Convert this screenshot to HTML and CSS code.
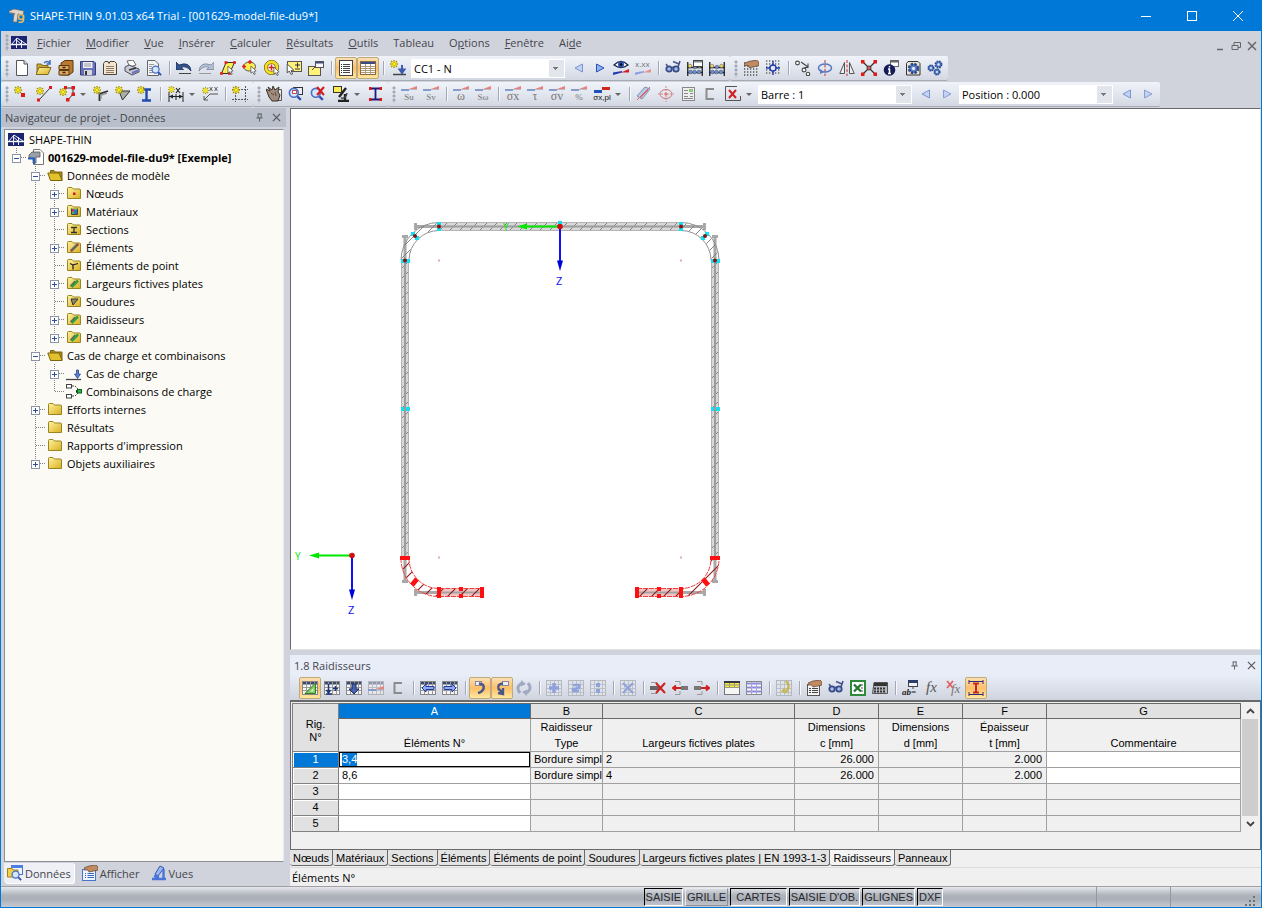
FILE: index.html
```html
<!DOCTYPE html>
<html lang="fr">
<head>
  <meta charset="UTF-8" />
  <meta name="viewport" content="width=device-width, initial-scale=1.0" />
  <title>SHAPE-THIN 9.01.03 x64 Trial</title>
  <link rel="stylesheet" href="styles.css">
</head>
<body>
  <!-- Icon sprite -->
  <svg class="sprite" aria-hidden="true">
    <defs>
      <linearGradient id="gFolder" x1="0" y1="0" x2="1" y2="1"><stop offset="0" stop-color="#fff3a0"/><stop offset="1" stop-color="#d9b020"/></linearGradient>
      <linearGradient id="gBlue" x1="0" y1="0" x2="1" y2="1"><stop offset="0" stop-color="#9db8ee"/><stop offset="1" stop-color="#1f3fa8"/></linearGradient>
      <pattern id="hatch" width="10" height="10" patternUnits="userSpaceOnUse"><path d="M0 10L10 0M-1 1L1 -1M9 11L11 9" stroke="#777" stroke-width=".9"/></pattern>
      <pattern id="hatchRed" width="12" height="12" patternUnits="userSpaceOnUse"><path d="M0 12L12 0M-1 1L1 -1M11 13L13 11" stroke="#8c1c1c" stroke-width="1.1"/></pattern>
    </defs>

    <!-- shared parts -->
    <symbol id="star" viewBox="0 0 8 8"><path d="M4 0V8M0 4H8M1 1L7 7M7 1L1 7" stroke="#a89400" stroke-width="1.4"/><path d="M4 1V7M1 4H7M2 2L6 6M6 2L2 6" stroke="#f8ec20"/></symbol>
    <symbol id="cursor" viewBox="0 0 8 10"><path d="M1 0L7 5.500L4.500 6L6 9L4.500 9.500L3 6.500L1 8Z" fill="#fff" stroke="#444" stroke-width=".8"/></symbol>
    <symbol id="lens" viewBox="0 0 12 12"><circle cx="5" cy="5" r="3.800" fill="#d6e6fb" stroke="#4a70c8" stroke-width="1.400"/><path d="M8 8L11 11" stroke="#2c50b0" stroke-width="2"/></symbol>
    <symbol id="wedge" viewBox="0 0 16 6"><path d="M0 3H8V5L0 5Z" fill="#7e9de0"/><path d="M8 3L16 0V3Z" fill="#e88080"/><path d="M0 3.500H16" stroke="#999" stroke-width=".6"/></symbol>
    <symbol id="folderBase" viewBox="0 0 16 16"><path d="M1.500 3.500Q1.500 2.500 2.500 2.500H6L7.500 4H13.500Q14.500 4 14.500 5V13.500H1.500Z" fill="url(#gFolder)" stroke="#9a8420"/></symbol>
    <symbol id="sheet" viewBox="0 0 16 16"><rect x=".5" y="1.500" width="15" height="13" fill="#f4f4f4" stroke="#888"/><rect x="1" y="2" width="14" height="2.500" fill="#3c4a70"/><path d="M1 7.500H15M1 10.500H15M4.500 2V14M8.500 2V14M12.500 2V14" stroke="#999"/></symbol>
    <symbol id="hand" viewBox="0 0 14 8"><path d="M0 3L5 1L12 0L14 2V5L10 6L5 7L4 5L0 5Z" fill="#c08a62" stroke="#60402a" stroke-width=".7"/></symbol>
    <symbol id="gear" viewBox="0 0 10 10"><circle cx="5" cy="5" r="3.400" fill="#5a80c8" stroke="#2b4a90" stroke-width="2" stroke-dasharray="1.800 .9"/><circle cx="5" cy="5" r="1.300" fill="#dfe8f8"/></symbol>

    <!-- brand -->
    <symbol id="app" viewBox="0 0 16 16"><path d="M0 3L5 1L15 3L14 7L9 6L8 14H4L5 6L0 5Z" fill="#ddd6cc" stroke="#6c6a72" stroke-width=".8"/><path d="M1 5L6 6" stroke="#777" stroke-width="1.500"/><circle cx="12" cy="9" r="2.500" fill="none" stroke="#e8b85c" stroke-width="1.600"/><path d="M14.500 7V12Q14 15 9.500 14" fill="none" stroke="#e8b85c" stroke-width="1.600"/></symbol>
    <symbol id="bridge" viewBox="0 0 16 13"><rect width="16" height="13" fill="#1c2470"/><path d="M0 8.500H16" stroke="#fff" stroke-width="1.400"/><path d="M5.500 2V12M10.500 4V12M6 2L1 8M6 2L15 8M6 4.500L10 8" stroke="#e8ebff" fill="none"/></symbol>

    <!-- standard toolbar -->
    <symbol id="new" viewBox="0 0 16 16"><path d="M2.500 .5H10L13.500 4V15.500H2.500Z" fill="#fff" stroke="#555"/><path d="M10 .5V4H13.500" fill="#ddd" stroke="#555"/></symbol>
    <symbol id="open" viewBox="0 0 16 16"><path d="M1 14V4H5L7 5.500H12V14Z" fill="#c9a63a" stroke="#80691c"/><path d="M0 14.500L3 7.500H15L12 14.500Z" fill="url(#gFolder)" stroke="#80691c"/><path d="M8 3Q11 0 14 3M14 0V4H10.500" fill="none" stroke="#3868b8" stroke-width="1.400"/></symbol>
    <symbol id="cabinet" viewBox="0 0 16 16"><path d="M3 3L7 .5H15V12L11 15H3Z" fill="#b87a30" stroke="#5c3810"/><path d="M1 5.500H11V9.500H1ZM1 10.500H11V15H1Z" fill="#e0ab60" stroke="#5c3810"/><path d="M4.500 7.500H7.500M4.500 12.500H7.500" stroke="#3c2408" stroke-width="1.500"/></symbol>
    <symbol id="save" viewBox="0 0 16 16"><path d="M.5 1.500H14L15.500 3V15H.5Z" fill="#6872b8" stroke="#363c78"/><rect x="3" y="2" width="9.500" height="6" fill="#eef0fa"/><path d="M4 4H11M4 6H11" stroke="#999"/><rect x="4" y="10" width="8" height="5" fill="#d8d8dc"/><rect x="5" y="11" width="2" height="4" fill="#333"/></symbol>
    <symbol id="report" viewBox="0 0 16 16"><path d="M1.500 3.500L3 1.500H6L7 3.500L8 1.500H12.500L14.500 3.500V14.500H1.500Z" fill="#f4e6ce" stroke="#4c4436"/><path d="M4 6.500H12M4 8.500H12M4 10.500H12M4 12.500H12" stroke="#8a7c66"/></symbol>
    <symbol id="print" viewBox="0 0 16 16"><path d="M3 1L9 0L12 5L6 7Z" fill="#fff" stroke="#666"/><path d="M1 7L5 5L15 9V12L8 15L1 11Z" fill="#c8cad8" stroke="#4c4c58"/><path d="M5 10L12 8" stroke="#333" stroke-width="1.500"/><path d="M8 13L14 10.500" stroke="#6874c0" stroke-width="2"/></symbol>
    <symbol id="preview" viewBox="0 0 16 16"><path d="M1.500 .5H9L12.500 4V15.500H1.500Z" fill="#f4f4f4" stroke="#666"/><path d="M3 4.500H8M3 6.500H6M3 8.500H6M3 10.500H6M3 12.500H7" stroke="#999"/><use href="#lens" x="5" y="5" width="11" height="11"/></symbol>
    <symbol id="undo" viewBox="0 0 16 16"><path d="M0 2V9.500H7.500L5 7.500Q10 5 15 11Q14 1 3 5Z" fill="#34548f" stroke="#1b2c58" stroke-width=".8"/><path d="M3 13.500H15" stroke="#444"/></symbol>
    <symbol id="redo" viewBox="0 0 16 16"><path d="M16 2V9.500H8.500L11 7.500Q6 5 1 11Q2 1 13 5Z" fill="#b4bfd4" stroke="#7b879e" stroke-width=".8"/><path d="M1 13.500H13" stroke="#999"/></symbol>
    <symbol id="selRhomb" viewBox="0 0 16 16"><path d="M1.500 13.500L6 2.500H14.500L9.500 13.500Z" fill="#ffee50" stroke="#333"/><path d="M0 13.500H3M4.500 2.500H7.500M13 2.500H16M8 13.500H11" stroke="#e02020" stroke-width="2.500"/><use href="#cursor" x="7" y="6" width="7" height="9"/></symbol>
    <symbol id="selOval" viewBox="0 0 16 16"><ellipse cx="7.500" cy="6.500" rx="6" ry="4.500" fill="#ffee50" stroke="#555"/><path d="M0 6.500H4M2 4.500V8.500M6 2H10M8 0V4" stroke="#e02020" stroke-width="1.500"/><use href="#cursor" x="8" y="6" width="7" height="9"/></symbol>
    <symbol id="selRing" viewBox="0 0 16 16"><circle cx="7.500" cy="7.500" r="5.500" fill="#fff" stroke="#5a4d00" stroke-width="4"/><circle cx="7.500" cy="7.500" r="5.500" fill="none" stroke="#f6df20" stroke-width="2.800"/><path d="M4.500 7.500H10.500M7.500 4.500V10.500" stroke="#e02020" stroke-width="1.500"/><use href="#cursor" x="9" y="7" width="7" height="9"/></symbol>
    <symbol id="selAdd" viewBox="0 0 16 16"><rect x="1.500" y="1.500" width="14" height="10" fill="#fff27a" stroke="#555"/><path d="M9 5H14M11.500 2.500V7.500M9 9H14" stroke="#333"/><use href="#cursor" x="0" y="4" width="9" height="11"/></symbol>
    <symbol id="selWin" viewBox="0 0 16 16"><rect x=".5" y="6.500" width="12" height="9" fill="#fff27a" stroke="#555"/><rect x="7.500" y="1.500" width="8" height="6" fill="#f8f8f8" stroke="#555"/><rect x="8" y="2" width="7" height="1.500" fill="#3b4a80"/><path d="M7 7L4 10" stroke="#555"/></symbol>
    <symbol id="list" viewBox="0 0 16 16"><rect x="1.500" y=".5" width="13" height="15" fill="#fff" stroke="#444"/><path d="M5 4.500H12M5 6.500H12M5 8.500H12M5 10.500H12M5 12.500H12" stroke="#444"/><path d="M3.500 4V13" stroke="#222" stroke-dasharray="1 1"/></symbol>
    <symbol id="table" viewBox="0 0 16 16"><rect x=".5" y="1.500" width="15" height="13" fill="#fff" stroke="#8a6a40"/><rect x="1" y="2" width="14" height="2" fill="#394c88"/><path d="M1 6.500H15M1 8.500H15M1 10.500H15M1 12.500H15M5.500 4V14M10.500 4V14" stroke="#b09878"/></symbol>
    <symbol id="loadNew" viewBox="0 0 16 16"><use href="#star" x="0" y="0" width="8" height="8"/><path d="M12 5V11M9.500 9.500L12 13L14.500 9.500Z" stroke="#3a5bb0" stroke-width="2" fill="#3a5bb0"/><path d="M3 14.500H16" stroke="#444" stroke-width="1.500"/></symbol>
    <symbol id="prev" viewBox="0 0 16 16"><path d="M11.500 4V12L4 8Z" fill="#c3d3f6" stroke="#7c94d0"/></symbol>
    <symbol id="next" viewBox="0 0 16 16"><path d="M4.500 4V12L12 8Z" fill="#8fb0f4" stroke="#2c52b4"/></symbol>
    <symbol id="nextOff" viewBox="0 0 16 16"><path d="M4.500 4V12L12 8Z" fill="#c3d3f6" stroke="#8c9cd4"/></symbol>
    <symbol id="eye" viewBox="0 0 16 16"><path d="M1 5Q8 -2 15 5Q8 10 1 5Z" fill="#fff" stroke="#1c2850" stroke-width="1.300"/><circle cx="8" cy="4.500" r="3" fill="#2d55b0"/><circle cx="8" cy="4.500" r="1.200" fill="#000"/><path d="M0 15V12.500L9 11V12.500Z" fill="#2038b0"/><path d="M8 12.500L16 9V12.500Z" fill="#d82020"/></symbol>
    <symbol id="glasses" viewBox="0 0 16 16"><path d="M1 4L4 8M8 1.500L14 4" stroke="#4a5a8c" stroke-width="1.500"/><circle cx="4" cy="9" r="2.700" fill="#a8bfe8" stroke="#3a4c88" stroke-width="1.800"/><circle cx="11" cy="9" r="2.700" fill="#a8bfe8" stroke="#3a4c88" stroke-width="1.800"/><path d="M6 8L9 7M13 7L15 1" stroke="#3a4c88" stroke-width="1.500"/></symbol>
    <symbol id="abacus" viewBox="0 0 16 16"><path d="M.75 2V16M15.250 2V16M0 7.500H16M0 12.500H16" stroke="#222" stroke-width="1.300"/><g stroke="#555" stroke-width=".5"><g fill="#f4d860"><circle cx="3" cy="6" r="1.800"/><circle cx="12.500" cy="6" r="1.800"/></g><g fill="#6a90d8"><circle cx="8" cy="7" r="1.800"/><circle cx="3.500" cy="12" r="1.900"/><circle cx="7.500" cy="12" r="1.900"/><circle cx="12" cy="12" r="1.900"/></g></g></symbol>
    <symbol id="abacusDlg" viewBox="0 0 16 16"><use href="#abacus"/><rect x="6.500" y=".5" width="9" height="6" fill="#fff" stroke="#444"/><rect x="7" y="1" width="8" height="1.500" fill="#888"/></symbol>
    <symbol id="gridHand" viewBox="0 0 16 16"><path d="M1 3H16M1 6H16M1 9H16M1 12H16M1 15H16" stroke="#555" stroke-width="1.300" stroke-dasharray="1.300 1.700"/><use href="#hand" x="1" y="0" width="15" height="9"/></symbol>
    <symbol id="gridSnap" viewBox="0 0 16 16"><path d="M1 1H16M1 4H16M1 7H16M1 10H16M1 13H16" stroke="#666" stroke-width="1.300" stroke-dasharray="1.300 1.700"/><path d="M8 1V15M1 8H15" stroke="#2038a0" stroke-width="1.300"/><circle cx="8" cy="8" r="3" fill="#dfe6f8" stroke="#2038a0" stroke-width="1.300"/></symbol>
    <symbol id="moveCopy" viewBox="0 0 16 16"><g fill="#fff" stroke="#444" stroke-width="1.100"><circle cx="2.500" cy="3" r="1.900"/><circle cx="9" cy="10" r="1.900"/><circle cx="13" cy="14" r="1.700"/><path d="M6 2L13 7M13 3.500V7.500H9.500" fill="none"/></g></symbol>
    <symbol id="rotate" viewBox="0 0 16 16"><path d="M8 0V16" stroke="#c83030" stroke-dasharray="3 1.500"/><ellipse cx="8" cy="8" rx="6.500" ry="4" fill="none" stroke="#5878c0" stroke-width="1.500"/><path d="M3 9L7 12L3 14Z" fill="#5878c0"/></symbol>
    <symbol id="mirror" viewBox="0 0 16 16"><path d="M8 0V16" stroke="#c83030" stroke-dasharray="3 1.500"/><path d="M5.500 2.500V13.500H.8Z" fill="#eee" stroke="#555"/><path d="M10.500 2.500V13.500H15.200Z" fill="#eee" stroke="#555"/></symbol>
    <symbol id="nodesX" viewBox="0 0 16 16"><path d="M2 2L14 14M14 2L2 14" stroke="#333" stroke-width="1.300"/><path d="M0 0H3.500V3.500H0ZM12.500 0H16V3.500H12.500ZM0 12.500H3.500V16H0ZM12.500 12.500H16V16H12.500Z" fill="#e01818"/><circle cx="8" cy="8" r="2" fill="#f06060" stroke="#333"/></symbol>
    <symbol id="info" viewBox="0 0 16 16"><rect x="7.500" y=".5" width="8" height="6" fill="#fff" stroke="#666"/><rect x="8" y="1" width="7" height="1.500" fill="#666"/><circle cx="6.500" cy="10" r="5.800" fill="#141c58"/><path d="M6.500 6V7.500M6.500 9V13.500M5 13.500H8M5 9H7" stroke="#fff" stroke-width="1.500"/></symbol>
    <symbol id="padGear" viewBox="0 0 16 16"><path d="M1.500 3.500L3 1.500H13L15 3.500V15H1.500Z" fill="#f1e4cc" stroke="#333"/><use href="#gear" x="2" y="2" width="13" height="13"/></symbol>
    <symbol id="gears" viewBox="0 0 16 16"><use href="#gear" x="0" y="4" width="8" height="8"/><use href="#gear" x="7" y="0" width="9" height="9"/><use href="#gear" x="6" y="8" width="8" height="8"/></symbol>

    <!-- edit toolbar -->
    <symbol id="nNode" viewBox="0 0 16 16"><use href="#star" x="0" y="0" width="8" height="8"/><rect x="7" y="7" width="4" height="4" fill="#e01818"/></symbol>
    <symbol id="nLine" viewBox="0 0 16 16"><path d="M3 14L14 2" stroke="#333"/><path d="M1 12.500H4V15.500H1ZM13 0H16V3H13Z" fill="#e01818"/><use href="#star" x="0" y="1" width="8" height="8"/></symbol>
    <symbol id="nPoly" viewBox="0 0 16 16"><path d="M6 2H14V8L9 14" fill="none" stroke="#333"/><path d="M12.500 0H16V3.500H12.500ZM12.500 6.500H16V10H12.500ZM7 12H10.500V15.500H7ZM5 0H8V3H5Z" fill="#e01818"/><use href="#star" x="0" y="2" width="8" height="8"/></symbol>
    <symbol id="nElem" viewBox="0 0 16 16"><path d="M6.500 15V8L15 5" fill="none" stroke="#333" stroke-width="1.800"/><path d="M3 4L6.500 8M8 13V9L14 7" fill="none" stroke="#8f968c" stroke-width="1.400"/><use href="#star" x="0" y="0" width="8" height="8"/></symbol>
    <symbol id="nWeld" viewBox="0 0 16 16"><path d="M4 5H15L7.500 14Z" fill="#a8aea4" stroke="#333"/><use href="#star" x="0" y="0" width="8" height="8"/></symbol>
    <symbol id="nI" viewBox="0 0 16 16"><path d="M5 3.500H14M5 14.500H14M9.500 3.500V14.500" stroke="#1f4cac" stroke-width="2.400"/><use href="#star" x="0" y="0" width="8" height="8"/></symbol>
    <symbol id="nGrid" viewBox="0 0 16 16"><path d="M3.500 0V16M13.500 0V16M0 3.500H16M0 13.500H16" stroke="#555" stroke-dasharray="2 1"/><use href="#star" x="0" y="0" width="8" height="8"/></symbol>
    <symbol id="pan" viewBox="0 0 16 16"><path d="M8 3.500H15.500V14.500H10" fill="none" stroke="#555"/><path d="M0 3L4 5L2 1L6 4L7 0L9 4L13 1L12 6L14 9L12 15H6L3 11Z" fill="#a08c7c" stroke="#3a3028"/><path d="M5 7L8 9M9 6L10 10" stroke="#5a4a3c"/></symbol>
    <symbol id="zoomWin" viewBox="0 0 16 16"><rect x="5.500" y="1.500" width="9" height="7" fill="#e8eefa" stroke="#333"/><use href="#lens" x="0" y="1" width="14" height="14"/><rect x="4.500" y="4.500" width="4" height="3" fill="#fff" stroke="#c05050"/></symbol>
    <symbol id="zoomX" viewBox="0 0 16 16"><use href="#lens" x="0" y="1" width="14" height="14"/><path d="M7 1L14 9M14 1L7 9" stroke="#d81818" stroke-width="2"/></symbol>
    <symbol id="micro" viewBox="0 0 16 16"><path d="M13 2L6 11M5 15H16M12 14V8" stroke="#222" stroke-width="2.400"/><path d="M8 12Q13 13 14 7" fill="none" stroke="#444" stroke-width="1.500"/><rect x=".5" y=".5" width="8" height="6" fill="#ffee50" stroke="#333"/></symbol>
    <symbol id="iSec" viewBox="0 0 16 16"><path d="M3 2.500H14M3 13.500H14M8.500 2.500V13.500" stroke="#1c1c80" stroke-width="1.800"/><path d="M2 1H4.500V4H2ZM12.500 1H15V4H12.500ZM2 12H4.500V15H2ZM12.500 12H15V15H12.500Z" fill="#e01818"/></symbol>
    <symbol id="hatchBar" viewBox="0 0 16 16"><path d="M1 10L9 1L14 3L6 13Z" fill="#b8cae8" stroke="#8090b0"/><path d="M4 12L12 4M1 14L14 1" stroke="#d86868"/></symbol>
    <symbol id="ovalCross" viewBox="0 0 16 16"><ellipse cx="8" cy="8" rx="6" ry="4.500" fill="none" stroke="#c87878"/><path d="M8 0V16M0 8H16" stroke="#d88888" stroke-dasharray="2 1"/><circle cx="8" cy="8" r="1.500" fill="#e08080"/></symbol>
    <symbol id="resTable" viewBox="0 0 16 16"><rect x="2.500" y="1.500" width="12" height="13" fill="#eee" stroke="#888"/><path d="M4 4.500H8M4 7.500H8M4 10.500H8M10 7.500H13M10 10.500H13M4 12.500H13" stroke="#888"/><rect x="9" y="3" width="4" height="3" fill="#8ec878"/></symbol>
    <symbol id="bracket" viewBox="0 0 16 16"><path d="M12 3H4.500V13H12" fill="none" stroke="#8c8c8c" stroke-width="2"/></symbol>
    <symbol id="boxX" viewBox="0 0 16 16"><path d="M12 .5H.5V14.500H15.500V10" fill="none" stroke="#555"/><path d="M4 4L11 12M11 4L4 12" stroke="#d02020" stroke-width="2"/></symbol>

    <!-- table toolbar -->
    <symbol id="tEdit" viewBox="0 0 16 16"><use href="#sheet"/><path d="M3 13.500L13.500 3V13.500Z" fill="#7cc860" stroke="#3a7c24"/><path d="M8 11.500L11.500 8V11.500Z" fill="#d8f0c8"/></symbol>
    <symbol id="tPlus" viewBox="0 0 16 16"><use href="#sheet"/><path d="M4.500 4V13M2.500 10L4.500 13L6.500 10M9 8.500H14M11.500 6V11M2 14H8" stroke="#1c3478" stroke-width="1.500" fill="none"/></symbol>
    <symbol id="tDown" viewBox="0 0 16 16"><use href="#sheet"/><path d="M6 4H10V9H13L8 14L3 9H6Z" fill="#4864b0" stroke="#1c2c60"/></symbol>
    <symbol id="tWedge" viewBox="0 0 16 16"><g opacity=".5"><use href="#sheet"/></g><use href="#wedge" x="0" y="6" width="16" height="6"/></symbol>
    <symbol id="tLeft" viewBox="0 0 16 16"><use href="#sheet"/><path d="M2 8L6 4V6.500H14V9.500H6V12Z" fill="#90aaf0" stroke="#2038a0"/></symbol>
    <symbol id="tRight" viewBox="0 0 16 16"><use href="#sheet"/><path d="M14 8L10 4V6.500H2V9.500H10V12Z" fill="#90aaf0" stroke="#2038a0"/></symbol>
    <symbol id="hook" viewBox="0 0 16 16"><rect x="3.500" y="1.500" width="6" height="4" fill="#eef" stroke="#889"/><path d="M7 3.500Q13 4 11.500 9Q10 12 6 13" fill="none" stroke="#4a5684" stroke-width="2.600"/></symbol>
    <symbol id="hook2" viewBox="0 0 16 16"><rect x="8.500" y="1.500" width="6" height="4" fill="#eef" stroke="#889"/><path d="M9 3.500Q3 4 4.500 9L8 12M9 8V14L4 13" fill="none" stroke="#4a5684" stroke-width="2.400"/></symbol>
    <symbol id="sync" viewBox="0 0 16 16"><path d="M4 13Q-1 7 6 3M12 3Q17 9 10 13" fill="none" stroke="#a0aac0" stroke-width="3"/><path d="M5 0L10 4L5 6.500ZM11 16L6 12L11 9.500Z" fill="#a0aac0"/></symbol>
    <symbol id="offSheet" viewBox="0 0 16 16"><rect x=".5" y=".5" width="15" height="15" fill="#e0e3ea" stroke="#b4b8c0"/><path d="M1 4.500H15M1 8.500H15M1 12.500H15M4.500 1V15M8.500 1V15M12.500 1V15" stroke="#bcc0c8"/></symbol>
    <symbol id="tAdd" viewBox="0 0 16 16"><use href="#offSheet"/><path d="M8 3V13M3 8H13" stroke="#8fa2dc" stroke-width="3.500"/></symbol>
    <symbol id="tOrd" viewBox="0 0 16 16"><use href="#offSheet"/><path d="M5 5H11V8L5 9V11H11" fill="none" stroke="#8fa2dc" stroke-width="2.500"/></symbol>
    <symbol id="tSplit" viewBox="0 0 16 16"><use href="#offSheet"/><path d="M6 3H10V7H6ZM6 9H10V13H6Z" fill="#8fa2dc"/></symbol>
    <symbol id="tDel" viewBox="0 0 16 16"><use href="#offSheet"/><path d="M3 3L13 13M13 3L3 13" stroke="#8fa2dc" stroke-width="2"/></symbol>
    <symbol id="rDel" viewBox="0 0 16 16"><path d="M1 2.500H7V5.500M1 13.500H7V10.500" fill="none" stroke="#999"/><rect x="0" y="6" width="10" height="4" fill="#666"/><path d="M6 3L15 13M15 3L6 13" stroke="#d02020" stroke-width="2"/></symbol>
    <symbol id="rLeft" viewBox="0 0 16 16"><path d="M3 1.500H8V5M3 14.500H8V11" fill="none" stroke="#999"/><path d="M1 8H9M4 5.500L1 8L4 10.500" fill="none" stroke="#d02020" stroke-width="2"/><rect x="9" y="6" width="7" height="4" fill="#777"/></symbol>
    <symbol id="rRight" viewBox="0 0 16 16"><path d="M3 1.500H8V5M3 14.500H8V11" fill="none" stroke="#999"/><path d="M7 8H15M12 5.500L15 8L12 10.500" fill="none" stroke="#d02020" stroke-width="2"/><rect x="0" y="6" width="7" height="4" fill="#777"/></symbol>
    <symbol id="tYellow" viewBox="0 0 16 16"><rect x=".5" y="1.500" width="15" height="13" fill="#f6f6f6" stroke="#777"/><rect x="1" y="2" width="14" height="5" fill="#f4e840"/><rect x="0" y="1" width="16" height="2" fill="#334"/><path d="M1 5H15M1 7.500H15M5.500 3V7M10.500 3V7" stroke="#998"/></symbol>
    <symbol id="tBlue" viewBox="0 0 16 16"><rect x=".5" y="1.500" width="15" height="13" fill="#f6f6ff" stroke="#888"/><path d="M1 3.500H15M1 7.500H15M1 11.500H15" stroke="#8c8ce8" stroke-width="2"/><path d="M5.500 2V14M10.500 2V14" stroke="#aaa"/></symbol>
    <symbol id="tNote" viewBox="0 0 16 16"><use href="#offSheet"/><path d="M6 12L9 9M10 1L12 4Q14 8 9 13" fill="none" stroke="#c8b440" stroke-width="2.200"/></symbol>
    <symbol id="handForm" viewBox="0 0 16 16"><rect x="1.500" y="4.500" width="12" height="11" fill="#f2f2f2" stroke="#555"/><path d="M3 8.500H5M6 8.500H12M3 10.500H5M6 10.500H12M3 12.500H5M6 12.500H12" stroke="#444"/><use href="#hand" x="2" y="0" width="14" height="8"/></symbol>
    <symbol id="excel" viewBox="0 0 16 16"><rect x="1" y="1" width="14" height="14" fill="#fff" stroke="#2f8a3c" stroke-width="2"/><path d="M4 4.500L11 11.500M11 4.500L4 11.500" stroke="#237a30" stroke-width="2.400"/><path d="M11 5H13M11 8H13M11 11H13" stroke="#555"/></symbol>
    <symbol id="calc" viewBox="0 0 16 16"><path d="M2 2.500H15.500V13.500H.5Z" fill="#b8bac0" stroke="#555"/><rect x="2" y="3" width="13" height="3" fill="#333"/><path d="M2 8.500H14M2 11.500H14" stroke="#333" stroke-width="2" stroke-dasharray="2 1"/></symbol>
    <symbol id="beam" viewBox="0 0 16 16"><path d="M1 1.500H15M1 14.500H15M1 0V4M15 0V4M1 12V16M15 12V16" stroke="#2c3070"/><path d="M5 3.500H11M5 12.500H11M8 3V13" stroke="#c82820" stroke-width="2"/></symbol>

    <!-- navigator -->
    <symbol id="model" viewBox="0 0 16 16"><path d="M5.500 .5H12L15.500 4V15.500H5.500Z" fill="#fff" stroke="#777"/><path d="M1 6L4 3H12V8H8V14H5V9H1Z" fill="#9aa0a8" stroke="#555" stroke-width=".8"/><path d="M0 9.500H6V15" fill="none" stroke="#2260c0" stroke-width="2"/></symbol>
    <symbol id="folderOpen" viewBox="0 0 16 16"><path d="M3.500 13V3.500H7L8.500 5H15V13Z" fill="#a88c1c" stroke="#7c6410"/><path d="M3.500 13.500L.8 6H12L15.200 13.500Z" fill="#e2c22c" stroke="#7c6410"/></symbol>
    <symbol id="fNode" viewBox="0 0 16 16"><use href="#folderBase"/><rect x="7" y="7.500" width="2.500" height="2.500" fill="#d01818"/></symbol>
    <symbol id="fMat" viewBox="0 0 16 16"><use href="#folderBase"/><path d="M5.500 5.500V11.500H11.500V5.500" fill="#60a850" stroke="#444"/><rect x="6" y="6" width="2" height="2.500" fill="#c83080"/><rect x="8" y="7" width="3" height="4" fill="#2878c0"/></symbol>
    <symbol id="fSec" viewBox="0 0 16 16"><use href="#folderBase"/><path d="M5 6.500H11M5 11.500H11M8 6.500V11.500" stroke="#333" stroke-width="1.300"/></symbol>
    <symbol id="fElem" viewBox="0 0 16 16"><use href="#folderBase"/><path d="M5 12L12 5" stroke="#666" stroke-width="2.600"/><path d="M4.500 11H6V12.500H4.500ZM11 5H12.500V6.500H11Z" fill="#d03030"/></symbol>
    <symbol id="fPoint" viewBox="0 0 16 16"><use href="#folderBase"/><path d="M7 12.500V8L12 6.500M4 6.500L7 8" fill="none" stroke="#222" stroke-width="1.300"/></symbol>
    <symbol id="fWeld" viewBox="0 0 16 16"><use href="#folderBase"/><path d="M5 6H12L7 12Z" fill="#8a8a70" stroke="#333"/></symbol>
    <symbol id="fStiff" viewBox="0 0 16 16"><use href="#folderBase"/><path d="M5.500 12L12 5.500" stroke="#30a040" stroke-width="2.600"/><path d="M4.500 11L9 6" stroke="#606060" stroke-width="1.200"/></symbol>
    <symbol id="loadCase" viewBox="0 0 16 16"><path d="M0 14.500H15" stroke="#444" stroke-width="1.300"/><path d="M10.500 5H12.500V9H14.500L11.500 13.500L8.500 9H10.500Z" fill="#5a80d0" stroke="#2c4890" stroke-width=".8"/></symbol>
    <symbol id="combo" viewBox="0 0 16 16"><rect x=".5" y="1.500" width="5" height="3.500" fill="#fff" stroke="#444"/><rect x=".5" y="11.500" width="5" height="3.500" fill="#fff" stroke="#444"/><path d="M6 3H9L12 6M6 13H9L12 10" fill="none" stroke="#444" stroke-dasharray="2 1"/><path d="M10 7L13 8L10 10" fill="#222"/><rect x="11.500" y="6.500" width="4" height="3.500" fill="#20c040" stroke="#0c6020"/></symbol>
    <symbol id="tabData" viewBox="0 0 16 16"><rect x="4.500" y=".5" width="11" height="9" fill="#f0f4fc" stroke="#4a74c8"/><rect x="4" y="0" width="12" height="3" fill="#4a80e0"/><path d="M.5 3.500H5L6 5H11V12H.5Z" fill="#f2d048" stroke="#a08020"/><use href="#lens" x="4" y="5" width="11" height="11"/></symbol>
    <symbol id="tabShow" viewBox="0 0 16 16"><rect x=".5" y="4.500" width="13" height="11" fill="#eef4fe" stroke="#4a74c8"/><path d="M3 8.500H4M5.500 8.500H12M3 10.500H4M5.500 10.500H12M3 12.500H4M5.500 12.500H12" stroke="#3c68b8"/><use href="#hand" x="2" y="0" width="14" height="8"/></symbol>
    <symbol id="tabViews" viewBox="0 0 16 16"><path d="M4 9L9 1L13 3L7 11Z" fill="#9ab4f0" stroke="#3458b8"/><path d="M1 14H15M12.500 14V4M3 11L8 12" stroke="#4a74d8" stroke-width="2.400"/></symbol>
    <symbol id="pin" viewBox="0 0 10 10"><path d="M3 1H7.500M3.500 1V5.500M6.800 1V5.500M1.500 5.500H8.500M5 5.500V9.500" stroke="#555" fill="none"/></symbol>
    <symbol id="close" viewBox="0 0 10 10"><path d="M1 1L9 9M9 1L1 9" stroke="currentColor" stroke-width="1.300"/></symbol>
  </svg>

  <header class="titlebar">
    <svg class="icon"><use href="#app"/></svg>
    <h1>SHAPE-THIN 9.01.03 x64 Trial - [001629-model-file-du9*]</h1>
    <div class="win-buttons">
      <button aria-label="Réduire"><svg viewBox="0 0 10 10"><path d="M0 5.500H10" stroke="#fff"/></svg></button>
      <button aria-label="Agrandir"><svg viewBox="0 0 10 10"><rect x=".5" y=".5" width="9" height="9" fill="none" stroke="#fff"/></svg></button>
      <button aria-label="Fermer"><svg viewBox="0 0 10 10"><path d="M0 0L10 10M10 0L0 10" stroke="#fff"/></svg></button>
    </div>
  </header>

  <nav class="menubar">
    <span class="grip"></span>
    <svg class="icon bridge"><use href="#bridge"/></svg>
    <button><u>F</u>ichier</button>
    <button><u>M</u>odifier</button>
    <button><u>V</u>ue</button>
    <button><u>I</u>nsérer</button>
    <button><u>C</u>alculer</button>
    <button><u>R</u>ésultats</button>
    <button><u>O</u>utils</button>
    <button>Tableau</button>
    <button>O<u>p</u>tions</button>
    <button><u>F</u>enêtre</button>
    <button>Ai<u>d</u>e</button>
    <div class="mdi-buttons">
      <button aria-label="Réduire le document"><svg viewBox="0 0 10 10"><path d="M2 8.500H8" stroke="#666" stroke-width="1.500"/></svg></button>
      <button aria-label="Restaurer le document"><svg viewBox="0 0 10 10"><path d="M1 4.500H7V8.500H1ZM3 4V1.500H9.500V6.500H7" fill="none" stroke="#666"/></svg></button>
      <button aria-label="Fermer le document"><svg viewBox="0 0 10 10"><path d="M1 1L9 9M9 1L1 9" stroke="#666" stroke-width="1.500"/></svg></button>
    </div>
  </nav>

  <div class="toolbar-row">
    <div class="toolbar">
      <span class="grip"></span>
      <button class="tb" aria-label="Nouveau"><svg><use href="#new"/></svg></button>
      <button class="tb" aria-label="Ouvrir"><svg><use href="#open"/></svg></button>
      <button class="tb" aria-label="Gestionnaire"><svg><use href="#cabinet"/></svg></button>
      <button class="tb" aria-label="Enregistrer"><svg><use href="#save"/></svg></button>
      <button class="tb" aria-label="Rapport"><svg><use href="#report"/></svg></button>
      <button class="tb" aria-label="Imprimer"><svg><use href="#print"/></svg></button>
      <button class="tb" aria-label="Aperçu"><svg><use href="#preview"/></svg></button>
      <span class="sep"></span>
      <button class="tb" aria-label="Annuler"><svg><use href="#undo"/></svg></button>
      <button class="tb" aria-label="Rétablir"><svg><use href="#redo"/></svg></button>
      <button class="tb" aria-label="Sélection losange"><svg><use href="#selRhomb"/></svg></button>
      <button class="tb" aria-label="Sélection ellipse"><svg><use href="#selOval"/></svg></button>
      <button class="tb" aria-label="Sélection anneau"><svg><use href="#selRing"/></svg></button>
      <button class="tb" aria-label="Sélection ajouter"><svg><use href="#selAdd"/></svg></button>
      <button class="tb" aria-label="Sélection spéciale"><svg><use href="#selWin"/></svg></button>
      <span class="sep"></span>
      <button class="tb on" aria-label="Navigateur"><svg><use href="#list"/></svg></button>
      <button class="tb on" aria-label="Tableaux"><svg><use href="#table"/></svg></button>
      <span class="sep"></span>
      <button class="tb" aria-label="Nouveau cas"><svg><use href="#loadNew"/></svg></button>
      <span class="combo"><select aria-label="Cas de charge"><option>CC1 - N</option></select></span>
      <button class="tb arrow" aria-label="Cas précédent"><svg><use href="#prev"/></svg></button>
      <button class="tb arrow" aria-label="Cas suivant"><svg><use href="#next"/></svg></button>
      <button class="tb" aria-label="Afficher les résultats"><svg><use href="#eye"/></svg></button>
      <button class="tb" aria-label="Afficher les valeurs"><svg viewBox="0 0 16 16"><text x="0" y="7" font-size="8" fill="#777">x.xx</text><path d="M0 15V12.500L9 11V12.500Z" fill="#8c9ee0"/><path d="M8 12.500L16 9V12.500Z" fill="#e89090"/></svg></button>
      <span class="sep"></span>
      <button class="tb" aria-label="Contrôle"><svg><use href="#glasses"/></svg></button>
      <button class="tb" aria-label="Paramètres de calcul"><svg><use href="#abacusDlg"/></svg></button>
      <button class="tb" aria-label="Calculer tout"><svg><use href="#abacus"/></svg></button>
    </div>
    <div class="toolbar">
      <span class="grip"></span>
      <button class="tb" aria-label="Grille"><svg><use href="#gridHand"/></svg></button>
      <button class="tb" aria-label="Accrochage"><svg><use href="#gridSnap"/></svg></button>
      <span class="sep"></span>
      <button class="tb" aria-label="Déplacer"><svg><use href="#moveCopy"/></svg></button>
      <button class="tb" aria-label="Rotation"><svg><use href="#rotate"/></svg></button>
      <button class="tb" aria-label="Miroir"><svg><use href="#mirror"/></svg></button>
      <button class="tb" aria-label="Connecter"><svg><use href="#nodesX"/></svg></button>
      <button class="tb" aria-label="Infos"><svg><use href="#info"/></svg></button>
      <button class="tb" aria-label="Options"><svg><use href="#padGear"/></svg></button>
      <button class="tb" aria-label="Modules"><svg><use href="#gears"/></svg></button>
    </div>
  </div>

  <div class="toolbar-row">
    <div class="toolbar">
      <span class="grip"></span>
      <button class="tb" aria-label="Nouveau nœud"><svg><use href="#nNode"/></svg></button>
      <button class="tb" aria-label="Nouvelle ligne"><svg><use href="#nLine"/></svg></button>
      <button class="tb split" aria-label="Nouvelle polyligne"><svg><use href="#nPoly"/></svg></button>
      <button class="tb" aria-label="Nouvel élément"><svg><use href="#nElem"/></svg></button>
      <button class="tb" aria-label="Nouvelle soudure"><svg><use href="#nWeld"/></svg></button>
      <button class="tb" aria-label="Nouvelle section"><svg><use href="#nI"/></svg></button>
      <span class="sep"></span>
      <button class="tb split" aria-label="Cotation"><svg viewBox="0 0 16 16"><path d="M1 6V16M15 6V16M1 10.500H15M8 8V14" stroke="#222"/><path d="M1 10.500L5 8.500V12.500ZM15 10.500L11 8.500V12.500Z" fill="#222"/><path d="M8 2L12 7M12 2L8 7" stroke="#222" stroke-width="1.200"/><use href="#star" x="0" y="0" width="7" height="7"/></svg></button>
      <button class="tb" aria-label="Commentaire"><svg viewBox="0 0 16 16"><path d="M7.500 1L10.500 5M10.500 1L7.500 5M12.500 1L15.500 5M15.500 1L12.500 5" stroke="#555" stroke-width=".9"/><path d="M16 8H8L2 14M2 10V14H6" fill="none" stroke="#555"/><use href="#star" x="0" y="1" width="7" height="7"/></svg></button>
      <span class="sep"></span>
      <button class="tb" aria-label="Ligne guide"><svg><use href="#nGrid"/></svg></button>
    </div>
    <div class="toolbar">
      <span class="grip"></span>
      <button class="tb" aria-label="Déplacer la vue"><svg><use href="#pan"/></svg></button>
      <button class="tb" aria-label="Zoom fenêtre"><svg><use href="#zoomWin"/></svg></button>
      <button class="tb" aria-label="Zoom tout"><svg><use href="#zoomX"/></svg></button>
      <button class="tb split" aria-label="Vue"><svg><use href="#micro"/></svg></button>
      <button class="tb" aria-label="Section"><svg><use href="#iSec"/></svg></button>
    </div>
    <div class="toolbar">
      <span class="grip"></span>
      <button class="tb res"><svg viewBox="0 0 16 16"><use href="#wedge" width="16" height="6"/><text x="8" y="14">Su</text></svg></button>
      <button class="tb res"><svg viewBox="0 0 16 16"><use href="#wedge" width="16" height="6"/><text x="8" y="14">Sv</text></svg></button>
      <span class="sep"></span>
      <button class="tb res"><svg viewBox="0 0 16 16"><use href="#wedge" width="16" height="6"/><text x="8" y="14" class="big">ω</text></svg></button>
      <button class="tb res"><svg viewBox="0 0 16 16"><use href="#wedge" width="16" height="6"/><text x="8" y="14">Sω</text></svg></button>
      <span class="sep"></span>
      <button class="tb res"><svg viewBox="0 0 16 16"><use href="#wedge" width="16" height="6"/><text x="8" y="14" class="big">σx</text></svg></button>
      <button class="tb res"><svg viewBox="0 0 16 16"><use href="#wedge" width="16" height="6"/><text x="8" y="14" class="big">τ</text></svg></button>
      <button class="tb res"><svg viewBox="0 0 16 16"><use href="#wedge" width="16" height="6"/><text x="8" y="14" class="big">σv</text></svg></button>
      <button class="tb res"><svg viewBox="0 0 16 16"><use href="#wedge" width="16" height="6"/><text x="8" y="14">%</text></svg></button>
      <button class="tb res pl split"><svg viewBox="0 0 20 16"><rect x="10" y="1" width="8" height="3" fill="#d02818"/><rect x="2" y="4" width="8" height="3" fill="#2050b8"/><text x="10" y="14">σx,pl</text></svg></button>
      <span class="sep"></span>
      <button class="tb" aria-label="Épaisseurs"><svg><use href="#hatchBar"/></svg></button>
      <button class="tb" aria-label="Ellipse d'inertie"><svg><use href="#ovalCross"/></svg></button>
      <button class="tb" aria-label="Tableau des résultats"><svg><use href="#resTable"/></svg></button>
      <button class="tb" aria-label="Section réduite"><svg><use href="#bracket"/></svg></button>
      <button class="tb split" aria-label="Supprimer"><svg><use href="#boxX"/></svg></button>
      <span class="combo"><select aria-label="Barre"><option>Barre : 1</option></select></span>
      <button class="tb arrow" aria-label="Barre précédente"><svg><use href="#prev"/></svg></button>
      <button class="tb arrow" aria-label="Barre suivante"><svg><use href="#nextOff"/></svg></button>
      <span class="combo"><select aria-label="Position"><option>Position : 0.000</option></select></span>
      <button class="tb arrow" aria-label="Position précédente"><svg><use href="#prev"/></svg></button>
      <button class="tb arrow" aria-label="Position suivante"><svg><use href="#nextOff"/></svg></button>
    </div>
  </div>

  <main class="workspace">
    <aside class="navigator">
      <div class="panel-title">
        <h2>Navigateur de projet - Données</h2>
        <button class="mini" aria-label="Épingler"><svg><use href="#pin"/></svg></button>
        <button class="mini" aria-label="Fermer"><svg><use href="#close"/></svg></button>
      </div>
      <div class="tree">
        <div class="root"><svg class="icon"><use href="#bridge"/></svg>SHAPE-THIN</div>
        <ul>
          <li>
            <div class="node"><button class="toggle open"></button><svg class="icon"><use href="#model"/></svg><b>001629-model-file-du9* [Exemple]</b></div>
            <ul>
              <li>
                <div class="node"><button class="toggle open"></button><svg class="icon"><use href="#folderOpen"/></svg>Données de modèle</div>
                <ul>
                  <li><div class="node"><button class="toggle"></button><svg class="icon"><use href="#fNode"/></svg>Nœuds</div></li>
                  <li><div class="node"><button class="toggle"></button><svg class="icon"><use href="#fMat"/></svg>Matériaux</div></li>
                  <li><div class="node leaf"><svg class="icon"><use href="#fSec"/></svg>Sections</div></li>
                  <li><div class="node"><button class="toggle"></button><svg class="icon"><use href="#fElem"/></svg>Éléments</div></li>
                  <li><div class="node leaf"><svg class="icon"><use href="#fPoint"/></svg>Éléments de point</div></li>
                  <li><div class="node"><button class="toggle"></button><svg class="icon"><use href="#fStiff"/></svg>Largeurs fictives plates</div></li>
                  <li><div class="node leaf"><svg class="icon"><use href="#fWeld"/></svg>Soudures</div></li>
                  <li><div class="node"><button class="toggle"></button><svg class="icon"><use href="#fStiff"/></svg>Raidisseurs</div></li>
                  <li><div class="node"><button class="toggle"></button><svg class="icon"><use href="#fStiff"/></svg>Panneaux</div></li>
                </ul>
              </li>
              <li>
                <div class="node"><button class="toggle open"></button><svg class="icon"><use href="#folderOpen"/></svg>Cas de charge et combinaisons</div>
                <ul>
                  <li><div class="node"><button class="toggle"></button><svg class="icon"><use href="#loadCase"/></svg>Cas de charge</div></li>
                  <li><div class="node leaf"><svg class="icon"><use href="#combo"/></svg>Combinaisons de charge</div></li>
                </ul>
              </li>
              <li><div class="node"><button class="toggle"></button><svg class="icon"><use href="#folderBase"/></svg>Efforts internes</div></li>
              <li><div class="node leaf"><svg class="icon"><use href="#folderBase"/></svg>Résultats</div></li>
              <li><div class="node leaf"><svg class="icon"><use href="#folderBase"/></svg>Rapports d'impression</div></li>
              <li><div class="node"><button class="toggle"></button><svg class="icon"><use href="#folderBase"/></svg>Objets auxiliaires</div></li>
            </ul>
          </li>
        </ul>
      </div>
      <div class="nav-tabs">
        <button class="active"><svg class="icon"><use href="#tabData"/></svg>Données</button>
        <button><svg class="icon"><use href="#tabShow"/></svg>Afficher</button>
        <button><svg class="icon"><use href="#tabViews"/></svg>Vues</button>
      </div>
    </aside>

    <section class="content">
      <div class="viewport">
        <svg>
          <g transform="translate(-291 -109)" fill="none">
            <!-- plates behind the corners -->
            <g stroke="#a8a8a8" stroke-width="3">
              <path d="M415 226.500H439M681 226.500H705M405 236V260M715 236V260M405 558V582M715 558V582M415 592.500H439M681 592.500H705"/>
              <path d="M415.500 223V230M704.500 223V230M402 236.500H408M712 236.500H718M402 581.500H408M712 581.500H718M415.500 589V596M704.500 589V596"/>
            </g>
            <!-- straight walls -->
            <g stroke="#d8d8d8" stroke-width="8"><path d="M439 226.500H681M405 260V558M715 260V558"/></g>
            <path d="M439 226.500H681M405 260V558M715 260V558" stroke="url(#hatch)" stroke-width="8"/>
            <g stroke="#9c9c9c" stroke-width="2"><path d="M439 226.500H681M405 260V558M715 260V558"/></g>
            <g stroke="#b4b4b4" stroke-width="1"><path d="M439 222.500H681M439 230.500H681M401.500 260V558M408.500 260V558M711.500 260V558M718.500 260V558"/></g>
            <!-- upper corners -->
            <path d="M405 260A34 34 0 0 1 439 226.500M681 226.500A34 34 0 0 1 715 260" stroke="url(#hatch)" stroke-width="7"/>
            <g stroke="#909090"><path d="M401 260A38 38 0 0 1 439 222.500M409 260A30 30 0 0 1 439 230.500M681 222.500A38 38 0 0 1 719 260M681 230.500A30 30 0 0 1 711 260"/></g>
            <!-- selected stiffeners -->
            <g stroke="#f4c4c4" stroke-width="8"><path d="M439 592.500H483M637 592.500H681"/></g>
            <g stroke="#a4a0a0" stroke-width="2"><path d="M439 592.500H483M637 592.500H681"/></g>
            <path d="M439 592.500H483M637 592.500H681M405 558A34 34 0 0 0 439 592.500M681 592.500A34 34 0 0 0 715 558" stroke="url(#hatchRed)" stroke-width="8"/>
            <g stroke="#f04040" stroke-dasharray="5 1"><path d="M401 558A38 38 0 0 0 439 596.500H483M409 558A30 30 0 0 0 439 588.500H483M637 596.500H681A38 38 0 0 0 719 558M637 588.500H681A30 30 0 0 0 711 558"/></g>
            <!-- nodes -->
            <path d="M437 222H441V225H437ZM437 228H441V231H437ZM679 222H683V225H679ZM679 228H683V231H679ZM558 221H562V225H558ZM401 259H404V263H401ZM406 259H410V263H406ZM711 259H714V263H711ZM716 259H720V263H716ZM411 232H415V236H411ZM415 236H419V240H415ZM705 232H709V236H705ZM701 236H705V240H701ZM401 407H404V411H401ZM406 407H410V411H406ZM711 407H714V411H711ZM716 407H720V411H716Z" fill="#10e0f0"/>
            <g fill="#8c1010"><circle cx="439" cy="226.500" r="2"/><circle cx="681" cy="226.500" r="2"/><circle cx="405" cy="260.500" r="2"/><circle cx="715" cy="260.500" r="2"/><circle cx="415" cy="236" r="2"/><circle cx="705" cy="236" r="2"/></g>
            <path d="M400 556H410V560H400ZM710 556H720V560H710ZM437 587H441V598H437ZM459 587H463V591H459ZM459 594H463V598H459ZM480 587H484V598H480ZM635 587H639V598H635ZM657 587H661V591H657ZM657 594H661V598H657ZM679 587H683V598H679Z" fill="#ff1010"/>
            <path d="M412 585L417 579M703 579L708 585" stroke="#ff1010" stroke-width="5"/>
            <path d="M438 260.500H440M680 260.500H682M438 557.500H440M680 557.500H682" stroke="#d8b0b0" stroke-width="2"/>
            <!-- axes -->
            <g id="axes">
              <path d="M560 226.500H526" stroke="#00e800" stroke-width="2"/><path d="M517 226.500L527 223.500V229.500Z" fill="#00e800"/>
              <path d="M560 227V262" stroke="#1010f0" stroke-width="2"/><path d="M560 271L557 260.500H563Z" fill="#0000d8"/>
              <circle cx="560" cy="226.500" r="2.800" fill="#d01010"/>
              <text x="503" y="231" font-size="10" fill="#00e800">Y</text>
              <text x="556" y="285" font-size="11" fill="#1010f0">Z</text>
            </g>
            <use href="#axes" x="-208" y="329"/>
          </g>
        </svg>
      </div>

      <section class="dock">
        <div class="dock-title">
          <h2>1.8 Raidisseurs</h2>
          <button class="mini" aria-label="Épingler"><svg><use href="#pin"/></svg></button>
          <button class="mini" aria-label="Fermer"><svg><use href="#close"/></svg></button>
        </div>
        <div class="dock-tools">
          <button class="tb on" aria-label="Éditer"><svg><use href="#tEdit"/></svg></button>
          <button class="tb" aria-label="Ajouter"><svg><use href="#tPlus"/></svg></button>
          <button class="tb" aria-label="Remplir"><svg><use href="#tDown"/></svg></button>
          <button class="tb" aria-label="Résultats"><svg><use href="#tWedge"/></svg></button>
          <button class="tb" aria-label="Section"><svg><use href="#bracket"/></svg></button>
          <span class="sep"></span>
          <button class="tb" aria-label="Tableau précédent"><svg><use href="#tLeft"/></svg></button>
          <button class="tb" aria-label="Tableau suivant"><svg><use href="#tRight"/></svg></button>
          <span class="sep"></span>
          <button class="tb on" aria-label="Synchroniser la vue"><svg><use href="#hook"/></svg></button>
          <button class="tb on" aria-label="Synchroniser le tableau"><svg><use href="#hook2"/></svg></button>
          <button class="tb" aria-label="Actualiser"><svg><use href="#sync"/></svg></button>
          <span class="sep"></span>
          <button class="tb" aria-label="Insérer"><svg><use href="#tAdd"/></svg></button>
          <button class="tb" aria-label="Ordonner"><svg><use href="#tOrd"/></svg></button>
          <button class="tb" aria-label="Diviser"><svg><use href="#tSplit"/></svg></button>
          <span class="sep"></span>
          <button class="tb" aria-label="Vider"><svg><use href="#tDel"/></svg></button>
          <span class="sep"></span>
          <button class="tb" aria-label="Supprimer la ligne"><svg><use href="#rDel"/></svg></button>
          <button class="tb" aria-label="Extraire"><svg><use href="#rLeft"/></svg></button>
          <button class="tb" aria-label="Intercaler"><svg><use href="#rRight"/></svg></button>
          <span class="sep"></span>
          <button class="tb" aria-label="En-tête"><svg><use href="#tYellow"/></svg></button>
          <button class="tb" aria-label="Lignes"><svg><use href="#tBlue"/></svg></button>
          <span class="sep"></span>
          <button class="tb" aria-label="Note"><svg><use href="#tNote"/></svg></button>
          <span class="sep"></span>
          <button class="tb" aria-label="Propriétés"><svg><use href="#handForm"/></svg></button>
          <button class="tb" aria-label="Contrôle"><svg><use href="#glasses"/></svg></button>
          <button class="tb" aria-label="Excel"><svg><use href="#excel"/></svg></button>
          <button class="tb" aria-label="Calculatrice"><svg><use href="#calc"/></svg></button>
          <span class="sep"></span>
          <button class="tb" aria-label="Paramètres"><svg viewBox="0 0 16 16"><rect x="6.500" y=".5" width="9" height="6" fill="#eef" stroke="#444"/><rect x="6" y="0" width="10" height="3" fill="#2c3c68"/><path d="M11 7V9" stroke="#444"/><text x="0" y="15" font-size="9" font-weight="bold" font-style="italic" class="serif" fill="#222">ab=</text></svg></button>
          <button class="tb" aria-label="Formule"><svg viewBox="0 0 16 16"><text x="2" y="12" font-size="15" font-style="italic" class="serif" fill="#555">fx</text></svg></button>
          <button class="tb" aria-label="Supprimer la formule"><svg viewBox="0 0 16 16"><text x="5" y="13" font-size="13" font-style="italic" class="serif" fill="#777">fx</text><path d="M1 1L7 8M7 1L1 8" stroke="#e06060" stroke-width="1.800"/></svg></button>
          <button class="tb on" aria-label="Profil"><svg><use href="#beam"/></svg></button>
        </div>

        <div class="grid-area">
          <table class="grid">
            <colgroup>
              <col class="c-row"><col class="c-wide"><col class="c-type"><col class="c-wide"><col class="c-num"><col class="c-num"><col class="c-num"><col>
            </colgroup>
            <thead>
              <tr class="letters">
                <th rowspan="2" class="corner">Rig.<br>N°</th>
                <th class="sel">A</th><th>B</th><th>C</th><th>D</th><th>E</th><th>F</th><th>G</th>
              </tr>
              <tr class="heads">
                <th>Éléments N°</th>
                <th>Raidisseur<br>Type</th>
                <th>Largeurs fictives plates</th>
                <th>Dimensions<br>c [mm]</th>
                <th>Dimensions<br>d [mm]</th>
                <th>Épaisseur<br>t [mm]</th>
                <th>Commentaire</th>
              </tr>
            </thead>
            <tbody>
              <tr><th class="sel">1</th><td class="edit"><input id="cell" type="text" value="3,4" aria-label="Éléments N°"></td><td>Bordure simpl</td><td>2</td><td class="num">26.000</td><td></td><td class="num">2.000</td><td class="w"></td></tr>
              <tr><th>2</th><td class="w">8,6</td><td>Bordure simpl</td><td>4</td><td class="num">26.000</td><td></td><td class="num">2.000</td><td class="w"></td></tr>
              <tr><th>3</th><td class="w"></td><td></td><td></td><td></td><td></td><td></td><td></td></tr>
              <tr><th>4</th><td class="w"></td><td></td><td></td><td></td><td></td><td></td><td></td></tr>
              <tr><th>5</th><td class="w"></td><td></td><td></td><td></td><td></td><td></td><td></td></tr>
            </tbody>
          </table>
          <div class="scrollbar">
            <button aria-label="Haut"><svg viewBox="0 0 9 6"><path d="M1 5L4.500 1.500L8 5" fill="none" stroke="#444" stroke-width="1.800"/></svg></button>
            <span class="thumb"></span>
            <button aria-label="Bas"><svg viewBox="0 0 9 6"><path d="M1 1L4.500 4.500L8 1" fill="none" stroke="#444" stroke-width="1.800"/></svg></button>
          </div>
        </div>

        <div class="sheet-tabs">
          <button>Nœuds</button>
          <button>Matériaux</button>
          <button>Sections</button>
          <button>Éléments</button>
          <button>Éléments de point</button>
          <button>Soudures</button>
          <button>Largeurs fictives plates | EN 1993-1-3</button>
          <button class="active">Raidisseurs</button>
          <button>Panneaux</button>
        </div>
        <p class="hint">Éléments N°</p>
      </section>
    </section>
  </main>

  <footer class="statusbar">
    <div class="flags">
      <span>SAISIE</span>
      <span class="off">GRILLE</span>
      <span class="roomy">CARTES</span>
      <span>SAISIE D'OB.</span>
      <span>GLIGNES</span>
      <span>DXF</span>
    </div>
    <span class="pane"></span>
    <span class="pane"></span>
    <span class="pane last"><svg class="resize" viewBox="0 0 12 12"><path d="M9 1H11V3H9ZM9 5H11V7H9ZM5 5H7V7H5ZM9 9H11V11H9ZM5 9H7V11H5ZM1 9H3V11H1Z" fill="#6c7078"/></svg></span>
  </footer>

  <script>
    // Put the active cell in edit mode
    const cell = document.getElementById('cell');
    cell.focus();
    cell.select();
  </script>
</body>
</html>
```
FILE: styles.css
```css
/* Reset & Global Styles */
* {
  margin: 0;
  padding: 0;
  box-sizing: border-box;
}
body {
  display: flex;
  flex-direction: column;
  height: 100vh;
  overflow: hidden;
  border: 1px solid #0078d7;
  border-top: none;
  background: #d0d3dc;
  color: #000;
  font-family: 'Open Sans', 'Noto Sans', sans-serif;
  font-size: 11px;
}
button, select, input {
  font: inherit;
  color: inherit;
  border: none;
  background: none;
}
button {
  display: flex;
  align-items: center;
  justify-content: center;
  white-space: nowrap;
}
h1, h2 {
  font-size: 11px;
  font-weight: 400;
}
.sprite {
  position: absolute;
  width: 0;
  height: 0;
}
.serif {
  font-family: 'Liberation Serif', serif;
}
.icon {
  width: 16px;
  height: 16px;
  flex: none;
}

/* Title bar */
.titlebar {
  display: flex;
  align-items: center;
  height: 31px;
  flex: none;
  padding-left: 8px;
  background: #0078d7;
  color: #fff;
}
.titlebar h1 {
  flex: 1;
  padding-left: 5px;
}
.win-buttons {
  display: flex;
}
.win-buttons button {
  width: 46px;
  height: 30px;
}
.win-buttons svg {
  width: 10px;
  height: 10px;
}

/* Menu */
.menubar {
  display: flex;
  align-items: center;
  height: 25px;
  flex: none;
  padding: 0 0 2px 3px;
  color: #45464c;
}
.menubar > button {
  padding: 0 7px;
  height: 22px;
}
.menubar > button + button {
  margin-left: 1px;
}
.menubar .bridge {
  margin-right: 3px;
  height: 13px;
}
.mdi-buttons {
  display: flex;
  gap: 6px;
  margin-left: auto;
  padding: 6px 4px 0 0;
}
.mdi-buttons svg {
  width: 10px;
  height: 10px;
}
.grip {
  width: 7px;
  height: 17px;
  flex: none;
  background: radial-gradient(circle at 3px 2px, #a4a8b4 1px, transparent 2px) 0 0 / 7px 4px;
}

/* Toolbars */
.toolbar-row {
  display: flex;
  height: 26px;
  flex: none;
}
.toolbar {
  display: flex;
  align-items: center;
  height: 25px;
  padding: 0 2px 0 3px;
  background: linear-gradient(#f0f3f9, #e2e6ef 50%, #d3d8e2);
  border-bottom: 1px solid #a6aab2;
  border-radius: 2px;
}
.tb {
  width: 22px;
  height: 22px;
  flex: none;
}
.tb svg {
  width: 16px;
  height: 16px;
  flex: none;
}
.tb.arrow {
  width: 21px;
}
.tb.on {
  border: 1px solid #c0a878;
  border-radius: 2px;
  background: linear-gradient(#fbe0b4, #fdbe68 50%, #ffe8a0);
}
.tb.split {
  width: 35px;
  padding-left: 4px;
  justify-content: flex-start;
}
.tb.split::after {
  content: '';
  margin-left: 5px;
  border: 3px solid transparent;
  border-top-color: #666;
  border-bottom: none;
}
.tb.res text {
  font-family: 'Liberation Serif', serif;
  font-size: 9px;
  text-anchor: middle;
  fill: #777;
}
.tb.res .big {
  font-size: 12px;
}
.tb.res.pl {
  padding-left: 2px;
}
.tb.res.pl svg {
  width: 20px;
}
.tb.res.pl::after {
  margin-left: 3px;
}
.tb.res.pl text {
  font-family: 'Liberation Sans', sans-serif;
  font-size: 8px;
  fill: #111;
}
.sep {
  width: 1px;
  height: 14px;
  flex: none;
  margin: 0 3px 0 4px;
  background: #a4a8b2;
  box-shadow: 1px 0 #f6f8fc;
}
.combo {
  display: flex;
  width: 154px;
  height: 19px;
  margin: 0 3px 0 2px;
  background: #fff;
}
.combo::after {
  content: '';
  width: 15px;
  flex: none;
  border: 1px solid #fff;
  background: linear-gradient(#777, #777) 4px 7px / 5px 1px no-repeat, linear-gradient(#777, #777) 5px 8px / 3px 1px no-repeat, linear-gradient(#777, #777) 6px 9px / 1px 1px no-repeat, #e2e5ec;
}
.combo select {
  flex: 1;
  min-width: 0;
  padding-left: 3px;
  appearance: none;
}

/* Main split */
.workspace {
  display: flex;
  flex: 1;
  min-height: 0;
}

/* Navigator */
.navigator {
  display: flex;
  flex-direction: column;
  width: 285px;
  flex: none;
}
.panel-title {
  display: flex;
  align-items: center;
  height: 19px;
  padding: 0 1px 0 4px;
  background: #b9c0cb;
  color: #45464c;
}
.panel-title h2, .dock-title h2 {
  flex: 1;
}
.mini {
  width: 17px;
  height: 16px;
  color: #555;
}
.mini svg {
  width: 9px;
  height: 9px;
}
.tree {
  flex: 1;
  margin: 2px 2px 0 3px;
  background: #fbfaf4;
  border: 1px solid #8c8f98;
  border-right-color: #e8eaf2;
}
.tree ul {
  list-style: none;
  margin-left: 19px;
}
.tree > ul {
  margin-left: 2px;
}
/* dotted guide running down beside the siblings */
.tree li {
  background: repeating-linear-gradient(#808080 0 1px, transparent 1px 2px) 9px 0 / 1px 100% no-repeat;
}
.tree li:last-child {
  background-size: 1px 9px;
}
.root, .node {
  display: flex;
  align-items: center;
  height: 18px;
  white-space: nowrap;
}
.root {
  padding-left: 3px;
}
.root .icon {
  margin-right: 5px;
  height: 13px;
}
.node {
  background: repeating-linear-gradient(90deg, #808080 0 1px, transparent 1px 2px) 10px 9px / 10px 1px no-repeat;
}
.node.leaf {
  padding-left: 19px;
}
.node .icon {
  margin: 0 4px 0 2px;
}
.toggle {
  width: 9px;
  height: 9px;
  flex: none;
  margin: 2px 5px 0;
  border: 1px solid #8c94a8;
  background: linear-gradient(#30509c, #30509c) 1px 3px / 5px 1px no-repeat, linear-gradient(#30509c, #30509c) 3px 1px / 1px 5px no-repeat, #fff;
}
.toggle.open {
  background: linear-gradient(#30509c, #30509c) 1px 3px / 5px 1px no-repeat, #fff;
}
.nav-tabs {
  display: flex;
  gap: 5px;
  height: 24px;
  padding: 1px 3px 3px;
  color: #45464c;
}
.nav-tabs button {
  gap: 2px;
  padding: 0 3px;
}
.nav-tabs .active {
  background: #eef0f5;
  border-radius: 0 0 3px 3px;
  box-shadow: 1px 1px #fff;
}

/* Right side */
.content {
  display: flex;
  flex-direction: column;
  flex: 1;
  min-width: 0;
  margin-left: 4px;
}
.viewport {
  flex: 1;
  min-height: 0;
  margin-bottom: 5px;
  border: 1px solid #696969;
  border-right-color: #e3e3e3;
  border-bottom-color: #e3e3e3;
  background: #fff;
}
.viewport svg {
  display: block;
  width: 100%;
  height: 100%;
}
.dock {
  background: #f0f0f0;
  font-family: 'Liberation Sans', sans-serif;
}
.dock-title {
  display: flex;
  align-items: center;
  height: 20px;
  padding: 0 1px 0 4px;
  background: #e9edf8;
  color: #45464c;
  font-family: 'Open Sans', 'Noto Sans', sans-serif;
}
.dock-tools {
  display: flex;
  align-items: center;
  height: 25px;
  padding-left: 9px;
  background: linear-gradient(#e9edf8, #cfd4de);
}

/* Table */
.grid-area {
  display: flex;
  align-items: flex-start;
  padding: 1px 2px 17px 1px;
  border: 1px solid #696969;
  border-top-width: 2px;
}
.grid {
  flex: 1;
  width: 0;
  table-layout: fixed;
  border-collapse: collapse;
}
.c-row {
  width: 46px;
}
.c-wide {
  width: 192px;
}
.c-type {
  width: 72px;
}
.c-num {
  width: 84px;
}
.grid th, .grid td {
  border: 1px solid #a0a0a0;
  font-weight: 400;
  line-height: 15px;
  white-space: nowrap;
}
.grid td {
  height: 16px;
  padding: 0 0 0 3px;
}
.letters th {
  height: 15px;
  line-height: 13px;
  background: #e1e1e1;
  border-color: #696969;
}
.heads th {
  height: 33px;
  line-height: 16px;
  vertical-align: bottom;
}
.grid .corner, .grid tbody th {
  background: #e1e1e1;
  border-color: #808080;
}
.grid .corner {
  line-height: 13px;
  padding-top: 7px;
}
.grid tbody th {
  box-shadow: inset 1px 1px #fff;
}
.grid .sel, .grid tbody .sel {
  background: #0078d7;
  color: #fff;
}
.grid .w {
  background: #fff;
}
.grid .num {
  padding-right: 4px;
  text-align: right;
}
.grid .edit {
  padding: 0;
}
.edit input {
  display: block;
  width: 100%;
  height: 15px;
  padding: 0 2px;
  border: 1px solid #000;
  background: #fff;
  outline: none;
}
.edit input::selection {
  background: #0078d7;
  color: #fff;
}
.scrollbar {
  display: flex;
  flex-direction: column;
  align-self: stretch;
  width: 16px;
  margin-left: 1px;
}
.scrollbar button {
  height: 16px;
}
.scrollbar svg {
  width: 9px;
  height: 6px;
}
.thumb {
  flex: 1;
  background: #cdcdcd;
}

/* Sheet tabs */
.sheet-tabs {
  display: flex;
  height: 17px;
}
.sheet-tabs button {
  height: 16px;
  padding: 0 3px;
  border: 1px solid #696969;
  border-top: none;
  border-left: none;
  border-radius: 0 0 3px 3px;
  background: #e4e4e4;
}
.sheet-tabs .active {
  background: #f4f4f4;
}
.hint {
  height: 19px;
  padding-left: 2px;
  line-height: 20px;
  font-family: 'Open Sans', 'Noto Sans', sans-serif;
  border-top: 1px solid #dcdcdc;
}

/* Status bar */
.statusbar {
  display: flex;
  justify-content: flex-end;
  height: 21px;
  flex: none;
  border-top: 1px solid #a0a0a0;
  background: linear-gradient(#e6e8ee, #b0b4bc 40%, #abafb8 60%, #c6c9d0);
  font-family: 'Liberation Sans', sans-serif;
  color: #26282c;
}
.flags {
  display: flex;
  flex: 1;
  gap: 2px;
  padding-top: 1px;
  margin-left: 51%;
}
.flags span {
  height: 18px;
  padding: 0 1px;
  line-height: 16px;
  white-space: nowrap;
  border: 1px solid #fff;
  border-top-color: #000;
  border-left-color: #000;
}
.flags .off {
  border-color: #e8eaee #8c9098 #8c9098 #e8eaee;
}
.flags .roomy {
  padding: 0 5px;
}
.pane {
  width: 74px;
  border-left: 1px solid #9498a0;
}
.pane.last {
  width: 17px;
  border: none;
  display: flex;
  align-items: flex-end;
}
.resize {
  width: 12px;
  height: 12px;
}
```
